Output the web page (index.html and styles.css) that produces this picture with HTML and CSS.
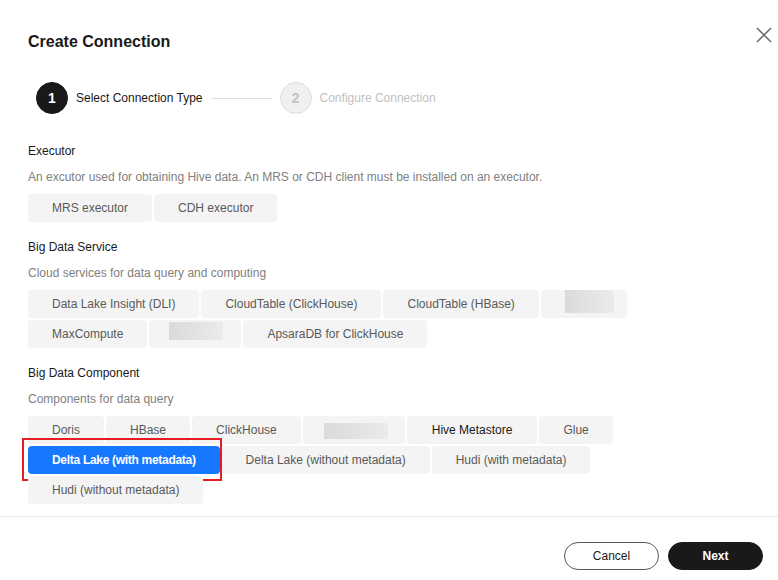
FILE: index.html
```html
<!DOCTYPE html>
<html>
<head>
<meta charset="utf-8">
<link rel="stylesheet" href="styles.css">
</head>
<body>
<div class="dialog">
  <div class="header">
    <div class="title">Create Connection</div>
    <svg class="close" width="16" height="16" viewBox="0 0 16 16"><path d="M1 1L15 15M15 1L1 15" stroke="#666" stroke-width="1.5" fill="none"/></svg>
  </div>
  <div class="steps">
    <span class="circle active">1</span>
    <span class="step-label active">Select Connection Type</span>
    <span class="step-line"></span>
    <span class="circle">2</span>
    <span class="step-label">Configure Connection</span>
  </div>
  <div class="content">
    <div class="section">
      <div class="sec-title">Executor</div>
      <div class="sec-desc">An excutor used for obtaining Hive data. An MRS or CDH client must be installed on an executor.</div>
      <div class="chips">
        <span class="chip">MRS executor</span>
        <span class="chip">CDH executor</span>
      </div>
    </div>
    <div class="section">
      <div class="sec-title">Big Data Service</div>
      <div class="sec-desc">Cloud services for data query and computing</div>
      <div class="chips">
        <span class="chip">Data Lake Insight (DLI)</span>
        <span class="chip">CloudTable (ClickHouse)</span>
        <span class="chip">CloudTable (HBase)</span>
        <span class="chip blur b1"><span class="ph ph1"></span></span>
        <span class="chip">MaxCompute</span>
        <span class="chip blur b2"><span class="ph ph2"></span></span>
        <span class="chip">ApsaraDB for ClickHouse</span>
      </div>
    </div>
    <div class="section">
      <div class="sec-title">Big Data Component</div>
      <div class="sec-desc">Components for data query</div>
      <div class="chips">
        <span class="chip">Doris</span>
        <span class="chip">HBase</span>
        <span class="chip">ClickHouse</span>
        <span class="chip blur b3"><span class="ph ph3"></span></span>
        <span class="chip hover">Hive Metastore</span>
        <span class="chip">Glue</span>
        <span class="chip selected">Delta Lake (with metadata)</span>
        <span class="chip">Delta Lake (without metadata)</span>
        <span class="chip">Hudi (with metadata)</span>
        <span class="chip">Hudi (without metadata)</span>
      </div>
    </div>
  </div>
  <div class="footer">
    <button class="btn cancel">Cancel</button>
    <button class="btn next">Next</button>
  </div>
</div>
</body>
</html>
```
FILE: styles.css
```css
* { box-sizing: border-box; }
html, body { margin: 0; padding: 0; background: #fff; }
body { font-family: "Liberation Sans", Arial, sans-serif; color: #191919; }
.dialog { width: 778px; height: 580px; position: relative; overflow: hidden; }
.header { padding: 30px 0 0 28px; }
.title { font-size: 16px; font-weight: bold; line-height: 24px; color: #191919; }
.close { position: absolute; top: 27px; right: 6px; }
.steps { display: flex; align-items: center; margin-top: 28px; padding-left: 36px; height: 32px; }
.circle { width: 32px; height: 32px; border-radius: 50%; display: flex; align-items: center; justify-content: center; font-size: 14px; font-weight: bold; background: #f0f0f0; color: #c2c2c2; border: 1px solid #dedede; }
.circle.active { background: #191919; color: #fff; border-color: #191919; }
.step-label { font-size: 12px; margin-left: 8px; color: #bfbfbf; }
.step-label.active { color: #191919; }
.step-line { width: 60px; height: 1px; background: #dcdcdc; margin: 0 8px 0 9px; }
.content { padding: 0 28px; margin-top: 28px; }
.section + .section { margin-top: 16px; }
.sec-title { font-size: 12px; line-height: 18px; color: #191919; }
.sec-desc { font-size: 12px; line-height: 18px; color: #808080; margin-top: 8px; }
.chips { display: flex; flex-wrap: wrap; gap: 2px 2px; margin-top: 8px; max-width: 680px; }
.chip { height: 28px; line-height: 28px; padding: 0 24px; font-size: 12px; color: #595959; background: #f4f4f4; border-radius: 4px; white-space: nowrap; position: relative; }
.chip.hover { color: #191919; padding: 0 25px; }
.chip.selected { background: #1677ff; color: #fff; font-weight: bold; letter-spacing: -0.3px; }
.chip.selected::after { content: ""; position: absolute; left: -6px; right: -2px; top: -8px; bottom: -7px; border: 2px solid #e51c23; }
.blur { display: flex; align-items: flex-start; padding: 0; }
.ph { display: block; background: linear-gradient(90deg, #dadada, #ebebeb); }
.b1 { width: 86px; padding-left: 24px; }
.ph1 { width: 49px; height: 23px; margin-top: 0; }
.b2 { width: 92px; padding-left: 20px; }
.ph2 { width: 54px; height: 18px; margin-top: 2px; }
.b3 { width: 102px; padding-left: 21px; }
.ph3 { width: 64px; height: 16px; margin-top: 7px; }
.footer { position: absolute; left: 0; right: 0; top: 516px; border-top: 1px solid #e8e8e8; display: flex; justify-content: flex-end; gap: 9px; padding: 25px 15px 0 0; }
.btn { width: 95px; height: 28px; border-radius: 14px; font-family: "Liberation Sans", Arial, sans-serif; font-size: 12px; cursor: pointer; }
.cancel { background: #fff; border: 1px solid #595959; color: #191919; }
.next { background: #191919; border: 1px solid #191919; color: #fff; font-weight: bold; }
```
